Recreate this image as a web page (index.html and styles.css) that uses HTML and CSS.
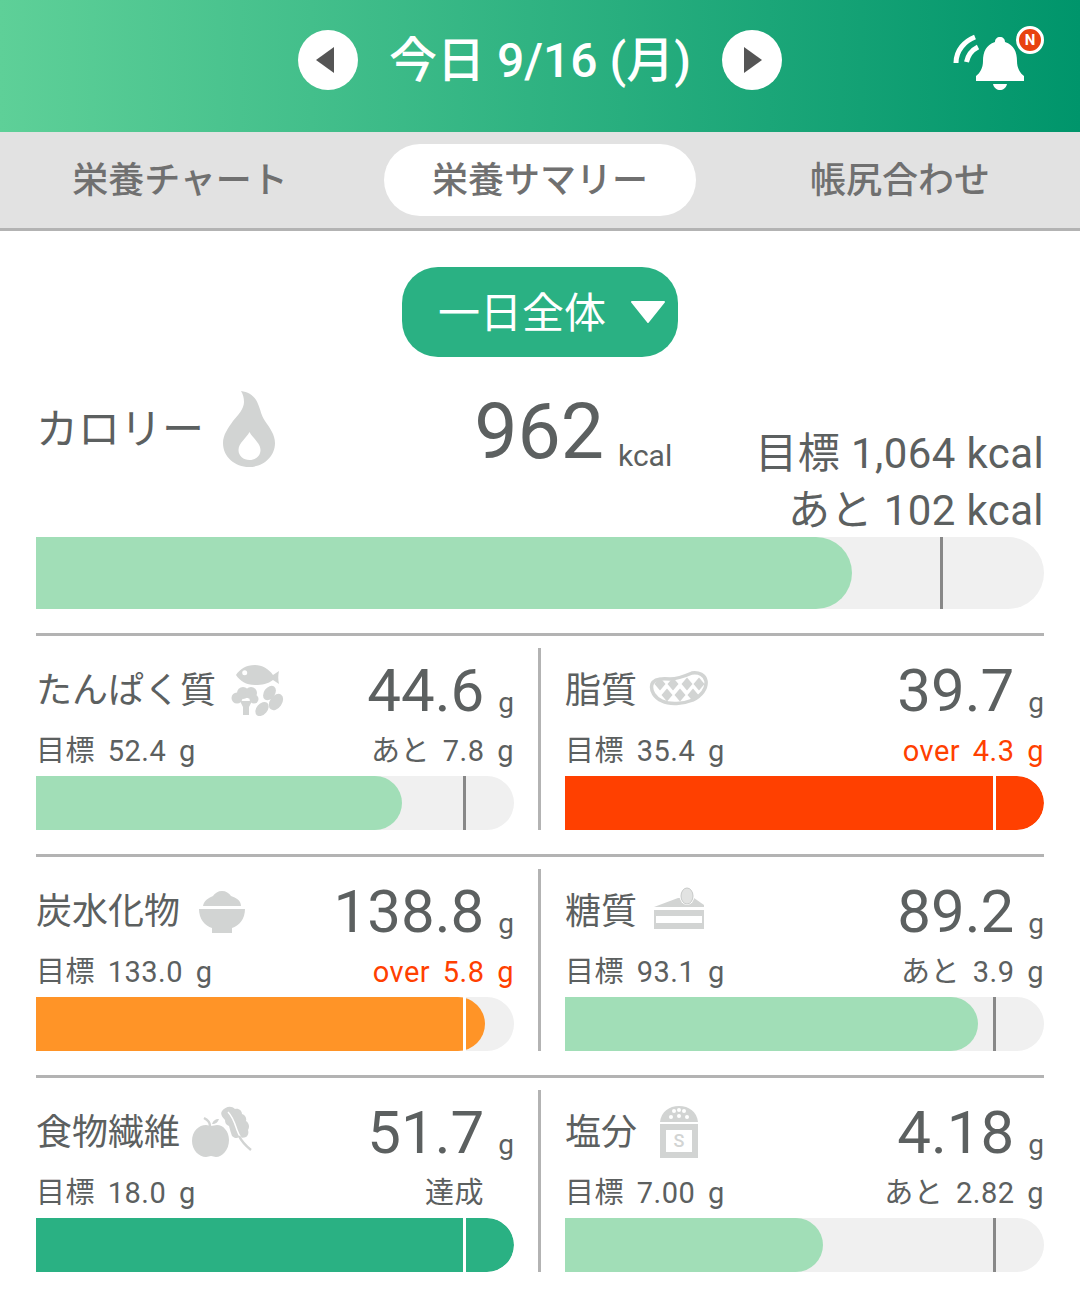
FILE: index.html
```html
<!DOCTYPE html>
<html lang="ja">
<head>
    <meta charset="UTF-8">
    <meta name="viewport" content="width=device-width, initial-scale=1.0">
    <title>栄養サマリー</title>
    <link rel="stylesheet" href="styles.css">
</head>
<body>

    <header class="header">
        <button class="nav-btn"><svg class="arrow-prev" width="18" height="26" viewBox="0 0 18 26"><path d="M18 0V26L0 13Z" fill="#555"/></svg></button>
        <h1 class="date">今日 9/16 (月)</h1>
        <button class="nav-btn"><svg class="arrow-next" width="18" height="26" viewBox="0 0 18 26"><path d="M0 0V26L18 13Z" fill="#555"/></svg></button>
        <div class="bell">
            <svg width="72" height="62" viewBox="0 0 72 62">
                <path d="M3 35C3 22 12 13 22 9" fill="none" stroke="#fff" stroke-width="5"/>
                <path d="M13.500 34C15 27 19 22 25 19" fill="none" stroke="#fff" stroke-width="5"/>
                <path d="M47 9c-3 0-5 2-5 5-9 3-12 10-12 19 0 7-3 12-7 15v5h48v-5c-4-3-7-8-7-15 0-9-3-16-12-19 0-3-2-5-5-5z" fill="#fff"/>
                <path d="M40 56h14c-1 4-4 6-7 6s-6-2-7-6z" fill="#fff"/>
            </svg>
            <span class="badge">N</span>
        </div>
    </header>

    <nav class="tabs">
        <a class="tab">栄養チャート</a>
        <a class="tab active">栄養サマリー</a>
        <a class="tab">帳尻合わせ</a>
    </nav>

    <div class="select-wrap">
        <div class="select"><span class="select-text">一日全体</span> <svg width="36" height="22" viewBox="0 0 36 22"><path d="M2 1H34L18 21Z" fill="#fff" stroke="#fff" stroke-width="2" stroke-linejoin="round"/></svg></div>
    </div>

    <section class="calorie">
        <div class="cal-top">
            <div class="cal-name"><span class="cal-label">カロリー</span>
                <svg class="flame" width="52" height="76" viewBox="0 0 52 76"><path fill-rule="evenodd" d="M18 0c8 1 14 5 17 13 3 7 3 11 7 17 5 7 10 14 10 22 0 14-12 24-26 24S0 66 0 52c0-8 5-15 10-22 5-6 11-12 11-19 0-4-1-8-3-11zM26.500 41c-3 6-11 11-11 18 0 6 5 10 11 10s11-4 11-10c0-7-8-12-11-18z" fill="#d2d4d3"/></svg>
            </div>
            <div class="cal-value">962<span class="cal-unit">kcal</span></div>
            <div class="cal-goal">
                <div>目標 1,064 kcal</div>
                <div>あと 102 kcal</div>
            </div>
        </div>
        <div class="bar bar-large">
            <div class="fill green" style="width: 816px"></div>
            <div class="mark" style="left: 904px"></div>
        </div>
    </section>

    <section class="row">
        <div class="cell">
            <div class="cell-top">
                <span class="name">たんぱく質</span>
                <svg class="icon icon-protein" width="54" height="52" viewBox="0 0 54 52" fill="#d2d4d3">
                    <path d="M5 11C9 5 15 1 24 1c7 0 14 4 18 10l6-4c-1 4-1 9 0 13l-6-4c-5 4-11 5-18 5C15 21 9 17 5 11z"/>
                    <circle cx="13.700" cy="8.700" r="2.500" fill="#fff"/>
                    <circle cx="6" cy="34" r="5.500"/>
                    <circle cx="12" cy="29" r="6"/>
                    <circle cx="20" cy="29" r="6"/>
                    <circle cx="23" cy="35" r="4.500"/>
                    <path d="M9 37h12l-3 6v8h-6v-8z"/>
                    <ellipse cx="38.500" cy="29" rx="5.500" ry="8" transform="rotate(35 38.500 29)"/>
                    <ellipse cx="45" cy="38" rx="6" ry="9" transform="rotate(35 45 38)"/>
                    <ellipse cx="31" cy="45" rx="5.500" ry="8" transform="rotate(40 31 45)"/>
                </svg>
                <span class="value">44.6<span class="unit">g</span></span>
            </div>
            <div class="cell-sub">
                <span>目標 52.4 g</span>
                <span>あと 7.8 g</span>
            </div>
            <div class="bar">
                <div class="fill green" style="width: 366px"></div>
                <div class="mark" style="left: 427px"></div>
            </div>
        </div>
        <div class="cell right">
            <div class="cell-top">
                <span class="name">脂質</span>
                <svg class="icon icon-fat" width="60" height="38" viewBox="-1 -1 60 38">
                    <path d="M2 14C4 9 11 8 20 9c8 0 15-3 22-6 7-1 13 2 14 8 1 8-5 15-13 19-10 4-23 5-31 1C5 28 0 21 2 14z" fill="#fff" stroke="#d2d4d3" stroke-width="3.500"/>
                    <g fill="#d2d4d3">
                        <path d="M10 7.500l5.500 6.500-5.500 6.500-5.500-6.500zM23 7.500l5.500 6.500-5.500 6.500-5.500-6.500zM37 7.500l5.500 6.500-5.500 6.500-5.500-6.500zM49 7.500l5.500 6.500-5.500 6.500-5.500-6.500z"/>
                        <path d="M17 18.500l5.500 6.500-5.500 6.500-5.500-6.500zM30 18.500l5.500 6.500-5.500 6.500-5.500-6.500zM43 18.500l5.500 6.500-5.500 6.500-5.500-6.500z"/>
                    </g>
                </svg>
                <span class="value">39.7<span class="unit">g</span></span>
            </div>
            <div class="cell-sub">
                <span>目標 35.4 g</span>
                <span class="over">over 4.3 g</span>
            </div>
            <div class="bar">
                <div class="fill full red"></div>
                <div class="mark light" style="left: 428px"></div>
            </div>
        </div>
    </section>

    <section class="row">
        <div class="cell">
            <div class="cell-top">
                <span class="name">炭水化物</span>
                <svg class="icon" width="48" height="46" viewBox="0 0 48 46" fill="#d2d4d3">
                    <path d="M5 18C6 12 11 10 15 8c2-3 5-5 9-5s7 2 9 5c5 2 10 4 10 10z"/>
                    <path d="M1 21h46c0 10-6 17-13 19v5H14v-5C7 38 1 31 1 21z"/>
                </svg>
                <span class="value">138.8<span class="unit">g</span></span>
            </div>
            <div class="cell-sub">
                <span>目標 133.0 g</span>
                <span class="over">over 5.8 g</span>
            </div>
            <div class="bar">
                <div class="fill orange" style="width: 449px"></div>
                <div class="mark light" style="left: 427px"></div>
            </div>
        </div>
        <div class="cell right">
            <div class="cell-top">
                <span class="name">糖質</span>
                <svg class="icon icon-cake" width="50" height="42" viewBox="0 0 50 42">
                    <path d="M0 20L24 11H40L50 18V20z" fill="#d2d4d3"/>
                    <path d="M0 23h50v19H0z" fill="#d2d4d3"/>
                    <path d="M2 29h46v7H2z" fill="#fff"/>
                    <ellipse cx="33" cy="9" rx="7.500" ry="9" fill="#fff"/>
                    <ellipse cx="33" cy="9" rx="6" ry="8" fill="#e2e3e2" stroke="#c8cac9"/>
                </svg>
                <span class="value">89.2<span class="unit">g</span></span>
            </div>
            <div class="cell-sub">
                <span>目標 93.1 g</span>
                <span>あと 3.9 g</span>
            </div>
            <div class="bar">
                <div class="fill green" style="width: 413px"></div>
                <div class="mark" style="left: 428px"></div>
            </div>
        </div>
    </section>

    <section class="row">
        <div class="cell">
            <div class="cell-top">
                <span class="name">食物繊維</span>
                <svg class="icon icon-fiber" width="60" height="52" viewBox="0 0 60 52" fill="#d2d4d3">
                    <path d="M0 35c0-10 7-16 14-16 2 0 3 1 5 1s4-1 6-1c6 0 12 6 12 15 0 10-7 17-13 17-2 0-3-1-5-1s-3 1-5 1C7 51 0 44 0 35z"/>
                    <path d="M18 20c0-3-2-6-6-8" fill="none" stroke="#d2d4d3" stroke-width="2.500"/>
                    <path d="M20 18c1-3 3-5 7-5-1 3-3 5-7 5z"/>
                    <path d="M30 5c3-4 9-6 13-2 4-1 7 2 7 5 3 1 5 4 4 7 3 2 4 6 2 9 1 3 0 6-2 7-2 1-5 1-7 0-2 2-5 1-7-1-1-3-2-6-3-10-3-1-4-3-4-6-3-3-5-6-3-9z"/>
                    <path d="M36 6c5 5 7 12 9 18 1 3 2 5 4 8" fill="none" stroke="#fff" stroke-width="1.500"/>
                    <path d="M47 30c3 6 7 10 12 14" fill="none" stroke="#d2d4d3" stroke-width="2.500"/>
                </svg>
                <span class="value">51.7<span class="unit">g</span></span>
            </div>
            <div class="cell-sub short">
                <span>目標 18.0 g</span>
                <span>達成</span>
            </div>
            <div class="bar">
                <div class="fill full teal"></div>
                <div class="mark light" style="left: 427px"></div>
            </div>
        </div>
        <div class="cell right">
            <div class="cell-top">
                <span class="name">塩分</span>
                <div class="salt icon">
                    <svg width="38" height="16" viewBox="0 0 38 16">
                        <path d="M0 16C1 6 9 0 19 0s18 6 19 16z" fill="#d2d4d3"/>
                        <g fill="#fff"><circle cx="14" cy="5" r="2"/><circle cx="19" cy="4" r="2"/><circle cx="24" cy="5" r="2"/><circle cx="11" cy="11" r="2"/><circle cx="19" cy="10" r="2"/><circle cx="27" cy="11" r="2"/></g>
                    </svg>
                    <span class="salt-body">S</span>
                </div>
                <span class="value">4.18<span class="unit">g</span></span>
            </div>
            <div class="cell-sub">
                <span>目標 7.00 g</span>
                <span>あと 2.82 g</span>
            </div>
            <div class="bar">
                <div class="fill green" style="width: 258px"></div>
                <div class="mark" style="left: 428px"></div>
            </div>
        </div>
    </section>

</body>
</html>
```

FILE: styles.css
```css
* {
    box-sizing: border-box;
}
body {
    margin: 0;
    width: 1080px;
    font-family: Roboto, "Noto Sans CJK JP", sans-serif;
    background-color: white;
    color: #5c6060;
}
.header {
    position: relative;
    height: 132px;
    padding-bottom: 12px;
    display: flex;
    align-items: center;
    justify-content: center;
    gap: 31px;
    background: linear-gradient(90deg, #5ed098, #00956b);
}
.nav-btn {
    width: 60px;
    height: 60px;
    padding: 0;
    border: none;
    border-radius: 50%;
    background-color: white;
    display: flex;
    align-items: center;
    justify-content: center;
}
.arrow-prev {
    margin-right: 6px;
}
.arrow-next {
    margin-left: 2px;
}
.date {
    margin: 2px 0 0;
    color: white;
    font-size: 48px;
    font-weight: 500;
    line-height: 60px;
}
.bell {
    position: absolute;
    left: 953px;
    top: 28px;
}
.bell svg {
    display: block;
}
.badge {
    position: absolute;
    left: 63px;
    top: -2px;
    width: 28px;
    height: 28px;
    border: 3px solid white;
    border-radius: 50%;
    background-color: #e8420f;
    color: white;
    font-size: 15px;
    font-weight: 700;
    line-height: 22px;
    text-align: center;
}
.tabs {
    height: 99px;
    padding-top: 12px;
    display: grid;
    grid-template-columns: 360px 360px 360px;
    justify-items: center;
    align-items: start;
    background-color: #e2e2e2;
    border-bottom: 3px solid #b3b3b3;
}
.tab {
    height: 72px;
    font-size: 36px;
    font-weight: 500;
    line-height: 74px;
    color: #707070;
}
.tab.active {
    width: 312px;
    text-align: center;
    background-color: white;
    border-radius: 36px;
}
.select-wrap {
    padding-top: 36px;
    display: flex;
    justify-content: center;
}
.select {
    width: 276px;
    height: 90px;
    padding-left: 24px;
    display: flex;
    align-items: center;
    justify-content: center;
    gap: 24px;
    background-color: #2ab183;
    border-radius: 36px;
    color: white;
    font-size: 42px;
}
.select-text {
    margin-bottom: 6px;
}
.calorie {
    margin: 0 36px;
    padding-top: 23px;
    padding-bottom: 24px;
}
.cal-top {
    height: 157px;
    display: flex;
}
.cal-name {
    width: 441px;
    height: 100px;
    display: flex;
    align-items: center;
    gap: 19px;
    font-size: 42px;
}
.cal-label {
    margin-bottom: 10px;
}
.flame {
    margin-bottom: 2px;
}
.cal-value {
    width: 283px;
    padding-top: 2px;
    font-size: 77px;
    line-height: 100px;
}
.cal-unit {
    margin-left: 14px;
    font-size: 30px;
    vertical-align: -8px;
}
.cal-goal {
    flex: 1;
    padding-top: 45px;
    font-size: 42px;
    line-height: 57px;
    letter-spacing: 0.4px;
    text-align: right;
    white-space: nowrap;
}
.bar {
    position: relative;
    height: 54px;
    background-color: #f0f0f0;
    border-radius: 0 27px 27px 0;
    overflow: hidden;
}
.bar-large {
    height: 72px;
    border-radius: 0 36px 36px 0;
}
.fill {
    height: 100%;
    border-radius: 0 36px 36px 0;
}
.fill.full {
    width: 100%;
}
.green {
    background-color: #a1deb7;
}
.red {
    background-color: #ff4000;
}
.orange {
    background-color: #ff9427;
}
.teal {
    background-color: #2ab183;
}
.mark {
    position: absolute;
    top: 0;
    bottom: 0;
    width: 3px;
    background-color: #888;
}
.mark.light {
    background-color: white;
}
.row {
    margin: 0 36px;
    padding-top: 12px;
    padding-bottom: 24px;
    display: flex;
    border-top: 3px solid #b3b3b3;
}
.cell {
    width: 478px;
    height: 182px;
    display: flex;
    flex-direction: column;
}
.cell.right {
    width: 506px;
    margin-left: 24px;
    padding-left: 24px;
    border-left: 3px solid #b3b3b3;
}
.cell-top {
    height: 84px;
    display: flex;
    align-items: center;
}
.name {
    padding-bottom: 6px;
    margin-right: 18px;
    font-size: 36px;
}
.icon-protein {
    margin-left: -3px;
}
.icon-fat {
    margin-left: -6px;
    margin-bottom: 4px;
}
.icon-cake {
    margin-left: -1px;
    margin-bottom: 6px;
}
.icon-fiber {
    margin-left: -6px;
}
.value {
    margin-left: auto;
    padding-top: 14px;
    font-size: 60px;
    line-height: 84px;
}
.unit {
    margin-left: 14px;
    font-size: 28px;
    vertical-align: -1px;
}
.cell-sub {
    height: 44px;
    display: flex;
    justify-content: space-between;
    align-items: flex-start;
    font-size: 29px;
    line-height: 38px;
    letter-spacing: 0.5px;
    word-spacing: 5px;
}
.cell-sub.short {
    padding-right: 30px;
}
.over {
    color: #ff4000;
}
.salt {
    width: 38px;
    margin-left: 5px;
    display: flex;
    flex-direction: column;
    align-items: center;
}
.salt svg {
    display: block;
}
.salt-body {
    width: 38px;
    height: 34px;
    margin-top: 2px;
    border: 6px solid #d2d4d3;
    color: #d2d4d3;
    font-size: 18px;
    font-weight: 500;
    line-height: 22px;
    text-align: center;
}
```
